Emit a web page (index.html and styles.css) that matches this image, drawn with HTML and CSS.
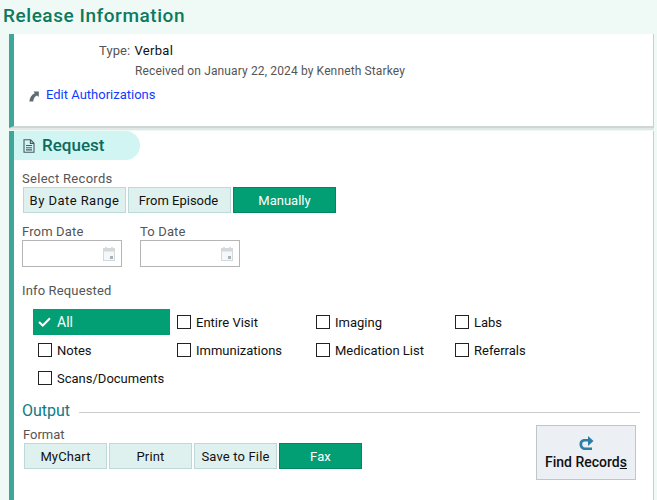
FILE: index.html
```html
<!DOCTYPE html>
<html lang="en">
<head>
    <meta charset="UTF-8">
    <title>Release Information</title>
    <link rel="stylesheet" href="styles.css">
</head>
<body>
    <h1 class="page-title">Release Information</h1>

    <div class="card card-top">
        <div class="type-line"><span class="type-label">Type:</span> <span class="type-value">Verbal</span></div>
        <div class="received">Received on January 22, 2024 by Kenneth Starkey</div>
        <div class="edit-line">
            <svg class="edit-icon" width="10" height="11" viewBox="0 0 10 11">
                <path d="M4.5 0.5 H9.8 V6 L8 4.4 C6 5.2 4.6 7 4.2 10.5 H0.4 C0.6 6.4 2.6 3.6 5.8 2.2 Z" fill="#5f6b73"/>
            </svg>
            <a class="edit-link" href="#">Edit Authorizations</a>
        </div>
    </div>

    <div class="card card-request">
        <div class="tab-head">
            <svg class="doc-icon" width="12" height="14" viewBox="0 0 12 14">
                <path d="M1 0.8 H7.6 L11 4.2 V13.2 H1 Z M7.4 1 V4.4 H11 M3 6.5 H9 M3 8.7 H9 M3 10.9 H9" fill="none" stroke="#4a5a66" stroke-width="1.1"/>
            </svg>
            <span>Request</span>
        </div>

        <div class="label label-select">Select Records</div>
        <div class="btn-row">
            <button class="btn w-range">By Date Range</button>
            <button class="btn w-episode">From Episode</button>
            <button class="btn btn-on w-manual">Manually</button>
        </div>

        <div class="date-row">
            <div class="date-field">
                <div class="label">From Date</div>
                <div class="date-box">
                    <svg width="12" height="14" viewBox="0 0 12 14"><path d="M3 0 V2 M9 0 V2" stroke="#d3d8db" stroke-width="1.6"/><rect x="0.5" y="1.5" width="11" height="12" fill="#f6f7f8" stroke="#d3d8db"/><rect x="0.5" y="1.5" width="11" height="3" fill="#d3d8db"/><rect x="7" y="9" width="3" height="3" fill="#a9b2b8"/></svg>
                </div>
            </div>
            <div class="date-field">
                <div class="label">To Date</div>
                <div class="date-box">
                    <svg width="12" height="14" viewBox="0 0 12 14"><path d="M3 0 V2 M9 0 V2" stroke="#d3d8db" stroke-width="1.6"/><rect x="0.5" y="1.5" width="11" height="12" fill="#f6f7f8" stroke="#d3d8db"/><rect x="0.5" y="1.5" width="11" height="3" fill="#d3d8db"/><rect x="7" y="9" width="3" height="3" fill="#a9b2b8"/></svg>
                </div>
            </div>
        </div>

        <div class="label label-info">Info Requested</div>
        <div class="check-grid">
            <div class="check check-on">
                <svg width="13" height="10" viewBox="0 0 13 10"><path d="M1 5 L4.8 8.5 L12 1.2" fill="none" stroke="#fff" stroke-width="2"/></svg>
                <span>All</span>
            </div>
            <div class="check"><span class="box"></span><span>Entire Visit</span></div>
            <div class="check"><span class="box"></span><span>Imaging</span></div>
            <div class="check"><span class="box"></span><span>Labs</span></div>
            <div class="check"><span class="box"></span><span>Notes</span></div>
            <div class="check"><span class="box"></span><span>Immunizations</span></div>
            <div class="check"><span class="box"></span><span>Medication List</span></div>
            <div class="check"><span class="box"></span><span>Referrals</span></div>
            <div class="check"><span class="box"></span><span>Scans/Documents</span></div>
        </div>

        <div class="output-head">
            <span>Output</span>
            <div class="output-rule"></div>
        </div>

        <div class="output-row">
            <div class="format">
                <div class="label label-format">Format</div>
                <div class="btn-row">
                    <button class="btn w-format">MyChart</button>
                    <button class="btn w-format">Print</button>
                    <button class="btn w-format">Save to File</button>
                    <button class="btn btn-on w-format">Fax</button>
                </div>
            </div>
            <button class="find-btn">
                <svg width="15" height="15" viewBox="0 0 15 15"><path d="M14.5 5 L9 0 V3 H5.5 C2.4 3 0.5 5.2 0.5 8.2 C0.5 11.4 2.6 14 5.8 14 H13 V11.4 H6 C4.2 11.4 3.2 10 3.2 8.2 C3.2 6.6 4.2 5.6 5.8 5.6 H9 V10 Z" fill="#2b7fa6"/></svg>
                <span>Find Record<u>s</u></span>
            </button>
        </div>
    </div>
</body>
</html>
```

FILE: styles.css
```css
html, body {
    margin: 0;
    height: 500px;
    overflow: hidden;
}

body {
    font-family: Roboto, "Liberation Sans", sans-serif;
    font-size: 13px;
    color: #111;
    background: #eff9f6;
}

.page-title {
    margin: 0;
    height: 34px;
    padding-left: 3px;
    font-size: 19px;
    line-height: 31px;
    font-weight: 500;
    letter-spacing: 0.55px;
    color: #0b7a5f;
}

.card {
    margin: 0 3px 0 9px;
    background: #fff;
    border-left: 5px solid #3fa79a;
    border-right: 1px solid #c9cfce;
}

.card-top {
    height: 94px;
    box-sizing: border-box;
    border-bottom: 2px solid #cfd6d5;
    box-shadow: 0 2px 0 #e1e8e6;
    padding-top: 8px;
    margin-bottom: 3px;
}

.type-line {
    padding-left: 85px;
    line-height: 17px;
}

.type-label {
    color: #555;
    margin-right: 1px;
    letter-spacing: 0.1px;
}

.type-value {
    letter-spacing: 0.3px;
}

.received {
    padding-left: 121px;
    margin-top: 4px;
    font-size: 12px;
    line-height: 16px;
    letter-spacing: 0.13px;
    color: #555;
}

.edit-line {
    display: flex;
    align-items: center;
    margin-top: 7px;
    padding-left: 15px;
}

.edit-icon {
    margin-right: 7px;
    margin-top: 3px;
}

.edit-link {
    color: #0f3cff;
    text-decoration: none;
    line-height: 17px;
}

.card-request {
    height: 369px;
    box-sizing: border-box;
}

.tab-head {
    width: 126px;
    height: 29px;
    display: flex;
    align-items: center;
    background: #d0f5f2;
    border-radius: 0 15px 15px 0;
    padding: 0 0 2px 9px;
    box-sizing: border-box;
    font-size: 17px;
    font-weight: 500;
    color: #0c6a5c;
}

.doc-icon {
    margin-right: 7px;
    margin-top: 2px;
}

.label {
    color: #555;
    line-height: 16px;
    letter-spacing: 0.15px;
}

.label-select {
    margin: 11px 0 0 8px;
    letter-spacing: 0.3px;
}

.btn-row {
    display: flex;
    gap: 2px;
}

.card-request > .btn-row {
    margin: 0 0 0 9px;
}

.btn {
    height: 26px;
    box-sizing: border-box;
    padding: 0;
    font: inherit;
    color: #111;
    background: #dff1ef;
    border: 1px solid #bcd8d9;
}

.btn-on {
    background: #029e74;
    border-color: #018760;
    color: #fff;
}

.w-range {
    width: 103px;
    letter-spacing: 0.45px;
}

.w-episode {
    width: 103px;
    padding-right: 2px;
}

.w-manual { width: 103px; }

.w-format {
    width: 83px;
    letter-spacing: 0.15px;
}

.date-row {
    display: flex;
    gap: 18px;
    margin: 11px 0 0 8px;
}

.date-box {
    width: 100px;
    height: 27px;
    box-sizing: border-box;
    border: 1px solid #b5b5b5;
    display: flex;
    align-items: center;
    justify-content: flex-end;
    padding-right: 6px;
}

.label-info {
    margin: 16px 0 0 8px;
}

.check-grid {
    display: grid;
    grid-template-columns: 139px 139px 139px 139px;
    grid-auto-rows: 28px;
    margin: 10px 0 0 19px;
}

.check {
    display: flex;
    align-items: center;
    padding-left: 5px;
    height: 26px;
}

.check-on {
    width: 137px;
    box-sizing: border-box;
    background: #029e74;
    color: #fff;
    font-size: 14px;
}

.check-on svg {
    margin-right: 6px;
}

.box {
    width: 12px;
    height: 12px;
    border: 1px solid #222;
    margin-right: 5px;
    background: #fff;
}

.output-head {
    display: flex;
    align-items: center;
    margin: 8px 0 0 8px;
    padding-right: 13px;
    font-size: 16px;
    line-height: 20px;
    color: #0f7a85;
}

.output-rule {
    flex: 1;
    height: 1px;
    margin: 2px 0 0 9px;
    background: #c9cccc;
}

.output-row {
    display: flex;
    justify-content: space-between;
    padding-right: 17px;
}

.format {
    margin: 6px 0 0 9px;
}

.label-format {
    letter-spacing: 0;
}

.format .btn-row {
    margin-left: 1px;
}

.find-btn {
    width: 100px;
    height: 55px;
    margin-top: 4px;
    padding: 0;
    display: flex;
    flex-direction: column;
    align-items: center;
    justify-content: center;
    gap: 3px;
    font: inherit;
    font-size: 14px;
    font-weight: 500;
    color: #111;
    background: #eceff3;
    border: 1px solid #bfc5c8;
}
```
